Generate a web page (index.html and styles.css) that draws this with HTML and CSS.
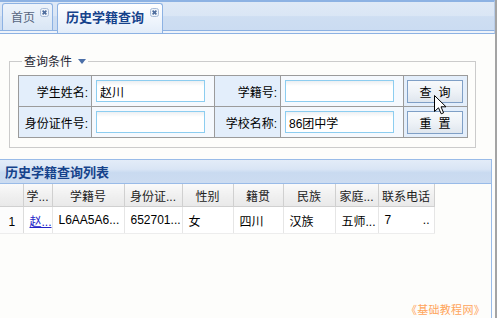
FILE: index.html
```html
<!DOCTYPE html>
<html lang="zh-CN">
<head>
    <meta charset="UTF-8">
    <title>历史学籍查询</title>
    <link rel="stylesheet" href="styles.css">
</head>
<body>
<div class="frame">

    <!-- onglets -->
    <div class="tab-strip">
        <div class="tab">
            <span class="tab-text">首页</span>
            <svg class="tab-close" width="9" height="9" viewBox="0 0 9 9"><rect x="0.5" y="0.5" width="8" height="8" rx="2" fill="#eef3fa" stroke="#a9bcd8"/><path d="M2.6 2.6 L6.4 6.4 M6.4 2.6 L2.6 6.4" stroke="#4d6c9c" stroke-width="1.6"/></svg>
        </div>
        <div class="tab tab-active">
            <span class="tab-text">历史学籍查询</span>
            <svg class="tab-close" width="9" height="9" viewBox="0 0 9 9"><rect x="0.5" y="0.5" width="8" height="8" rx="2" fill="#eef3fa" stroke="#a9bcd8"/><path d="M2.6 2.6 L6.4 6.4 M6.4 2.6 L2.6 6.4" stroke="#4d6c9c" stroke-width="1.6"/></svg>
        </div>
    </div>
    <div class="tab-spacer"></div>

    <div class="tab-body">
        <!-- conditions -->
        <fieldset class="query">
            <legend>查询条件<span class="legend-arrow"></span></legend>
            <table class="query-table">
                <colgroup>
                    <col class="c-label1"><col class="c-field"><col class="c-label2"><col class="c-field"><col class="c-action">
                </colgroup>
                <tr>
                    <td class="label">学生姓名:</td>
                    <td class="field"><input type="text" value="赵川"></td>
                    <td class="label">学籍号:</td>
                    <td class="field"><input type="text"></td>
                    <td class="action"><button>查询</button></td>
                </tr>
                <tr>
                    <td class="label">身份证件号:</td>
                    <td class="field"><input type="text"></td>
                    <td class="label">学校名称:</td>
                    <td class="field"><input type="text" value="86团中学"></td>
                    <td class="action"><button>重置</button></td>
                </tr>
            </table>
        </fieldset>

        <!-- liste -->
        <div class="grid-panel">
            <div class="grid-title">历史学籍查询列表</div>
            <table class="grid">
                <colgroup>
                    <col class="g-rn"><col class="g-1"><col class="g-2"><col class="g-3"><col class="g-4"><col class="g-5"><col class="g-6"><col class="g-7"><col class="g-8">
                </colgroup>
                <tr class="grid-head">
                    <th></th>
                    <th>学...</th>
                    <th>学籍号</th>
                    <th>身份证...</th>
                    <th>性别</th>
                    <th>籍贯</th>
                    <th>民族</th>
                    <th>家庭...</th>
                    <th>联系电话</th>
                </tr>
                <tr class="grid-row">
                    <td class="rn">1</td>
                    <td><a href="#">赵...</a></td>
                    <td>L6AA5A6...</td>
                    <td>652701...</td>
                    <td>女</td>
                    <td>四川</td>
                    <td>汉族</td>
                    <td>五师...</td>
                    <td><span class="phone"><span>7</span><span>..</span></span></td>
                </tr>
            </table>
        </div>
    </div>

    <div class="watermark">《基础教程网》</div>

    <svg class="cursor" width="13" height="20" viewBox="0 0 13 20">
        <path d="M0.5 0.5 L0.5 16.5 L4.5 12.8 L7.2 18.8 L9.6 17.8 L7 11.8 L12 11.8 Z" fill="#fff" stroke="#000" stroke-linejoin="miter"/>
    </svg>
</div>
</body>
</html>
```

FILE: styles.css
```css
/* page */
body {
    margin: 0;
    background: #fdfdfb;
    font-family: "Liberation Sans", "Noto Sans CJK SC", sans-serif;
    font-size: 12px;
    color: #000;
}
.frame {
    position: relative;
    width: 495px;
    height: 318px;
    border-right: 2px solid #a4a4a4;
    background: #fdfdfb;
    overflow: hidden;
}

/* onglets */
.tab-strip {
    display: flex;
    align-items: flex-end;
    gap: 4px;
    height: 28px;
    padding-left: 2px;
    border-top: 2px solid #8db2e3;
    border-bottom: 1px solid #8db2e3;
    border-right: 1px solid #b9cde8;
    background: linear-gradient(#dfe9f6 0, #dae6f5 50%, #cedef2 52%, #cbdcf2 100%);
}
.tab {
    display: flex;
    height: 26px;
    padding: 0 3px 0 8px;
    border: 1px solid #8db2e3;
    border-bottom: none;
    border-radius: 3px 3px 0 0;
    background: linear-gradient(#eef4fb, #d9e6f5);
    color: #56657e;
}
.tab-text {
    line-height: 26px;
    font-family: "Noto Sans CJK SC", sans-serif;
    font-size: 12px;
}
.tab-close {
    margin: 4px 0 0 5px;
}
.tab-active {
    position: relative;
    z-index: 1;
    height: 29px;
    margin-bottom: -3px;
    background: linear-gradient(#ffffff, #eef4fc 60%, #e3edf9);
    color: #15428b;
}
.tab-active .tab-text {
    font-size: 13px;
    font-weight: bold;
    line-height: 25px;
}
.tab-active .tab-close {
    margin-left: 6px;
}
.tab-spacer {
    height: 2px;
    border-bottom: 1px solid #8db2e3;
    border-right: 1px solid #b9cde8;
    background: #eef3fa;
}

.tab-body {
    padding: 20px 0 0 9px;
}

/* conditions */
.query {
    box-sizing: border-box;
    width: 467px;
    margin: 0;
    padding: 7px 7px 9px 8px;
    border: 1px solid #cbcbcb;
    min-width: 0;
}
.query legend {
    margin-left: 4px;
    padding: 0 2px;
    line-height: 14px;
    font-family: "Noto Sans CJK SC", sans-serif;
    color: #1e2633;
}
.legend-arrow {
    display: inline-block;
    width: 0;
    height: 0;
    margin-left: 6px;
    vertical-align: 2px;
    border-left: 4px solid transparent;
    border-right: 4px solid transparent;
    border-top: 5px solid #4b6fa8;
}
.query-table {
    width: 450px;
    table-layout: fixed;
    border-collapse: collapse;
}
.c-label1 { width: 73px; }
.c-label2 { width: 66px; }
.c-field { width: 123px; }
.c-action { width: 64px; }
.query-table td {
    height: 30px;
    padding: 0;
    border: 1px solid #9b9b9b;
}
.query-table .label {
    padding-right: 3px;
    text-align: right;
    background: #e3eefb;
    white-space: nowrap;
}
.query-table .field {
    padding-left: 4px;
    background: #f5f9fe;
}
.query-table .action {
    padding-left: 3px;
    background: #e3eefb;
}
.query-table input {
    box-sizing: border-box;
    display: block;
    width: 109px;
    height: 22px;
    margin: 0;
    padding: 0 0 0 3px;
    border: 1px solid #8ccdf0;
    background: linear-gradient(#eceff2, #ffffff 5px);
    font-family: "Liberation Sans", "Noto Sans CJK SC", sans-serif;
    font-size: 12px;
    color: #000;
}
.query-table button {
    display: block;
    box-sizing: border-box;
    width: 56px;
    height: 23px;
    padding: 0 0 0 7px;
    border: 1px solid #7f9fc6;
    background: linear-gradient(#f7f9fb, #eef2f7 50%, #dfe6ee);
    font-family: "Noto Sans CJK SC", sans-serif;
    font-size: 12px;
    letter-spacing: 7px;
    color: #000;
    cursor: pointer;
}

/* liste */
.grid-panel {
    width: 491px;
    height: 200px;
    margin: 11px 0 0 -9px;
    border: 1px solid #99bbe8;
    border-left: none;
    background: #fdfdfb;
}
.grid-title {
    height: 23px;
    padding-left: 5px;
    border-bottom: 1px solid #99bbe8;
    background: linear-gradient(#e3ecf8, #d9e5f5 40%, #c9daf0 55%, #ccdcf1);
    font-family: "Noto Sans CJK SC", sans-serif;
    font-size: 13px;
    font-weight: bold;
    line-height: 23px;
    color: #15428b;
}
.grid {
    width: 434px;
    table-layout: fixed;
    border-collapse: collapse;
    font-family: "Liberation Sans", "Noto Sans CJK SC", sans-serif;
    font-size: 12px;
}
.g-rn { width: 23px; }
.g-1 { width: 29px; }
.g-2 { width: 72px; }
.g-3 { width: 58px; }
.g-4 { width: 51px; }
.g-5 { width: 50px; }
.g-6 { width: 52px; }
.g-7 { width: 43px; }
.g-8 { width: 56px; }
.grid-head th {
    height: 22px;
    padding: 0;
    border-right: 1px solid #d0d0d0;
    border-bottom: 1px solid #d0d0d0;
    background: linear-gradient(#fafafa, #f0f0f0 50%, #e9e9e9);
    font-weight: normal;
    text-align: center;
    white-space: nowrap;
    overflow: hidden;
    color: #222;
}
.grid-row td {
    height: 22px;
    padding: 0 0 0 6px;
    border-right: 1px solid #e6e6e6;
    border-bottom: 1px solid #ededed;
    background: #fff;
    white-space: nowrap;
    overflow: hidden;
}
.grid-row .rn {
    padding: 4px 0 0 1px;
    text-align: center;
    background: #fcfcfc;
    border-right: 1px solid #dcdcdc;
}
.grid-row a {
    color: #2323c8;
}
.phone {
    display: flex;
    justify-content: space-between;
    padding-right: 4px;
}

/* filigrane */
.watermark {
    position: absolute;
    right: 10px;
    bottom: 1px;
    font-family: "Noto Sans CJK SC", sans-serif;
    font-size: 11px;
    letter-spacing: 0.3px;
    color: #ffa55c;
}

/* curseur */
.cursor {
    position: absolute;
    left: 434px;
    top: 95px;
}
```
